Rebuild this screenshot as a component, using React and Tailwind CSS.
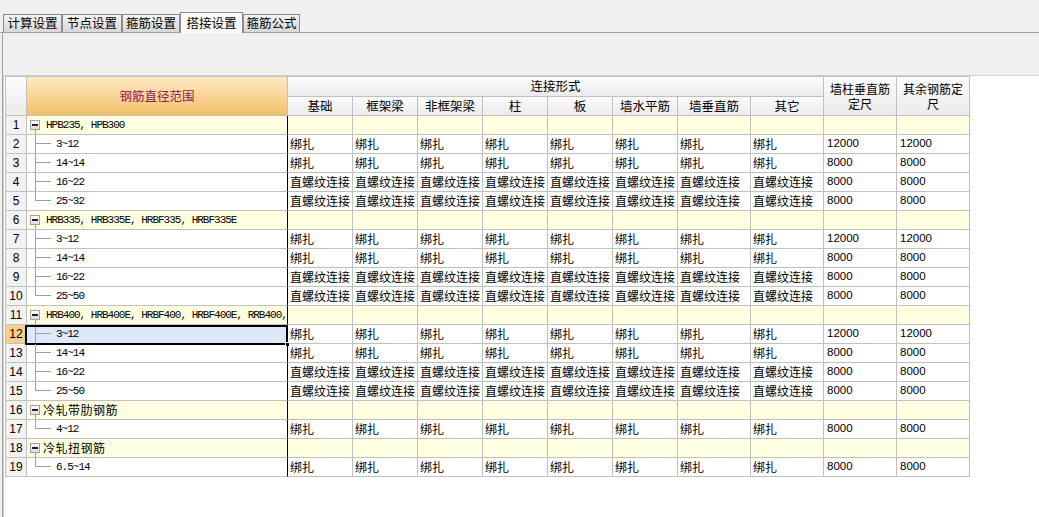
import React from 'react';

const COLS =
  'grid grid-cols-[21px_261px_65px_65px_65px_65px_65px_65px_73px_73px_73px_73px]';

const TABS = [
  { label: '计算设置', w: 'w-[59px]' },
  { label: '节点设置', w: 'w-[60px]' },
  { label: '箍筋设置', w: 'w-[58px]' },
  { label: '搭接设置', w: 'w-[63px]', active: true },
  { label: '箍筋公式', w: 'w-[57px]' },
];

const SUBS = ['基础', '框架梁', '非框架梁', '柱', '板', '墙水平筋', '墙垂直筋', '其它'];

const BZ = Array(8).fill('绑扎');
const ZL = Array(8).fill('直螺纹连接');

const ROWS = [
  { group: 'HPB235, HPB300', ascii: true },
  { label: '3~12', cells: BZ, a: '12000', b: '12000' },
  { label: '14~14', cells: BZ, a: '8000', b: '8000' },
  { label: '16~22', cells: ZL, a: '8000', b: '8000' },
  { label: '25~32', cells: ZL, a: '8000', b: '8000', last: true },
  { group: 'HRB335, HRB335E, HRBF335, HRBF335E', ascii: true },
  { label: '3~12', cells: BZ, a: '12000', b: '12000' },
  { label: '14~14', cells: BZ, a: '8000', b: '8000' },
  { label: '16~22', cells: ZL, a: '8000', b: '8000' },
  { label: '25~50', cells: ZL, a: '8000', b: '8000', last: true },
  { group: 'HRB400, HRB400E, HRBF400, HRBF400E, RRB400,', ascii: true },
  { label: '3~12', cells: BZ, a: '12000', b: '12000', selected: true },
  { label: '14~14', cells: BZ, a: '8000', b: '8000' },
  { label: '16~22', cells: ZL, a: '8000', b: '8000' },
  { label: '25~50', cells: ZL, a: '8000', b: '8000', last: true },
  { group: '冷轧带肋钢筋' },
  { label: '4~12', cells: BZ, a: '8000', b: '8000', last: true },
  { group: '冷轧扭钢筋' },
  { label: '6.5~14', cells: BZ, a: '8000', b: '8000', last: true },
];

const cell = 'border-r border-b border-[#c0c0c0]';
const hdr = `${cell} bg-linear-to-b from-[#fcfcfc] to-[#ebebeb] flex items-center justify-center`;
const mono = "font-['Liberation_Mono','Noto_Sans_CJK_SC',monospace] text-[11px] tracking-[-1px]";
const num = "font-['Liberation_Sans',sans-serif] text-[11.5px]";

function NumCell({ n, selected }) {
  return (
    <div
      className={`${cell} flex items-center justify-center font-['Liberation_Sans',sans-serif] text-[12px] ${
        selected ? 'bg-[#f8d08c]' : 'bg-[#f2f2f2]'
      }`}
    >
      {n}
    </div>
  );
}

function GroupRow({ n, row }) {
  return (
    <div className={`${COLS} h-[19px] bg-[#ffffe1]`}>
      <NumCell n={n} />
      <div className="flex items-stretch border-r border-b border-r-black border-b-[#c0c0c0] pl-[3px]">
        <div className="flex w-[10px] flex-col">
          <div className="flex-1" />
          <div className="flex h-[10px] w-[10px] items-center justify-center border border-[#a0a0a0] bg-linear-to-b from-white to-[#dcdcdc]">
            <div className="h-[2px] w-[6px] bg-[#222]" />
          </div>
          <div className="flex-1 ml-[5px] border-l border-[#a0a0a0]" />
        </div>
        <div
          className={`flex items-center whitespace-nowrap ${
            row.ascii ? `${mono} ml-[6px]` : 'ml-[3px] text-[12px] tracking-[0.5px]'
          }`}
        >
          {row.group}
        </div>
      </div>
      {Array.from({ length: 10 }).map((_, i) => (
        <div key={i} className={cell} />
      ))}
    </div>
  );
}

function DataRow({ n, row }) {
  return (
    <div className={`${COLS} h-[19px] bg-white`}>
      <NumCell n={n} selected={row.selected} />
      <div
        className={`relative flex items-stretch border-r border-b border-r-black border-b-[#c0c0c0] ${
          row.selected ? 'bg-[#dde9f9]' : ''
        }`}
      >
        <div className="w-[8px]" />
        <div className="flex w-[16px] flex-col">
          <div className="h-[9px] border-l border-b border-[#a0a0a0]" />
          <div className={`flex-1 ${row.last ? '' : 'border-l border-[#a0a0a0]'}`} />
        </div>
        <div className={`ml-[5px] flex items-center ${mono} tracking-[-0.5px]`}>{row.label}</div>
        {row.selected && (
          <>
            <div className="pointer-events-none absolute left-[-2px] right-[-1px] top-0 bottom-[-2px] border-2 border-black" />
            <div className="absolute right-[-3px] bottom-[-4px] h-[5px] w-[5px] border border-white bg-black" />
          </>
        )}
      </div>
      {row.cells.map((c, i) => (
        <div key={i} className={`${cell} flex items-center overflow-hidden whitespace-nowrap pl-[2px] text-[12px]`}>
          {c}
        </div>
      ))}
      <div className={`${cell} flex items-center pl-[3px] ${num}`}>{row.a}</div>
      <div className={`${cell} flex items-center pl-[3px] ${num}`}>{row.b}</div>
    </div>
  );
}

export default function App() {
  return (
    <div className="h-[517px] w-[1039px] overflow-hidden bg-[#f0f0f0] font-['Noto_Sans_CJK_SC',sans-serif] text-[12px] leading-none text-black">
      {/* tab strip */}
      <div className="flex h-[33px] items-end border-b border-[#a0a0a0] pl-[3px]">
        {TABS.map((t) =>
          t.active ? (
            <div
              key={t.label}
              className={`${t.w} -mb-px flex h-[21px] items-center justify-center border border-b-0 border-[#8c8c8c] bg-[#fbfbfb] text-[12.5px]`}
            >
              {t.label}
            </div>
          ) : (
            <div
              key={t.label}
              className={`${t.w} flex h-[18px] items-center justify-center border border-b-0 border-[#8c8c8c] bg-linear-to-b from-[#f4f4f4] to-[#d8d8d8] text-[12.5px]`}
            >
              {t.label}
            </div>
          )
        )}
      </div>

      {/* panel */}
      <div className="ml-[2px] flex h-[484px] flex-col border-l border-[#a0a0a0]">
        <div className="h-[42px] shrink-0" />
        <div className="flex-1 border-t border-l border-[#d0d0d0] bg-white pl-px">
          <div className="w-fit border-t border-l border-[#c0c0c0]">
            <div className={`${COLS} grid-rows-[20px_19px]`}>
              <div className={`row-span-2 ${hdr}`} />
              <div
                className={`row-span-2 ${cell} flex items-center justify-center bg-linear-to-b from-[#fde9c2] to-[#f3c067] text-[12.5px] text-[#8b1c5a]`}
              >
                钢筋直径范围
              </div>
              <div className={`col-span-8 ${hdr} text-[12.5px]`}>连接形式</div>
              <div className={`row-span-2 ${hdr} flex-col text-[12px]`}>
                <span className="leading-[15px]">墙柱垂直筋</span>
                <span className="leading-[15px]">定尺</span>
              </div>
              <div className={`row-span-2 ${hdr} flex-col text-[12px]`}>
                <span className="leading-[15px]">其余钢筋定</span>
                <span className="leading-[15px]">尺</span>
              </div>
              {SUBS.map((s) => (
                <div key={s} className={`${hdr} text-[12.5px]`}>
                  {s}
                </div>
              ))}
            </div>
            {ROWS.map((r, i) =>
              r.group ? <GroupRow key={i} n={i + 1} row={r} /> : <DataRow key={i} n={i + 1} row={r} />
            )}
          </div>
        </div>
      </div>
    </div>
  );
}
